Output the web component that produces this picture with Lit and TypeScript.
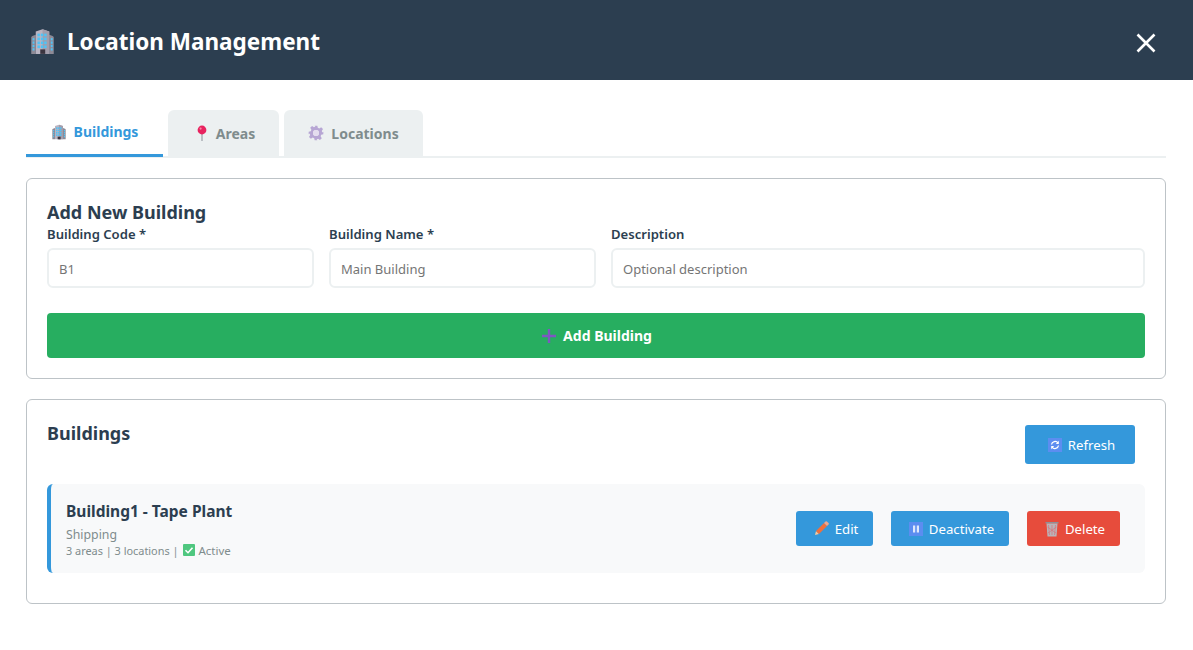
import { html, css, LitElement, svg } from 'lit';
import { customElement } from 'lit/decorators.js';

const building = (size: number) => html`
	<svg class="ico" width=${size} height=${size} viewBox="0 0 24 24">
		<path d="M3 7l3-1v17H2V8z" fill="#8d8a96" />
		<path d="M18 6l3 1 1 1v15h-4z" fill="#8d8a96" />
		<path d="M6 3l6-2 6 2v20H6z" fill="#b9b4c2" />
		<path d="M12 1l6 2v20h-6z" fill="#a39eac" />
		${[5, 8.5, 12, 15.5].map((y) => [7.5, 10.5, 13.5].map((x) => svg`<rect x=${x} y=${y} width="2.2" height="2.4" fill="#4fc3f7" />`))}
		${[9, 12, 15, 18].map((y) => svg`<rect x="3.2" y=${y} width="1.6" height="2" fill="#4fc3f7" /><rect x="19.4" y=${y} width="1.6" height="2" fill="#4fc3f7" />`)}
		<rect x="10" y="19" width="4.4" height="4" fill="#3b3540" />
	</svg>
`;

const pin = html`
	<svg class="ico" width="14" height="16" viewBox="0 0 14 16">
		<rect x="6.4" y="7" width="1.2" height="9" fill="#9aa0a6" />
		<circle cx="7" cy="5" r="4.4" fill="#e8235f" />
		<circle cx="5.6" cy="3.6" r="1.1" fill="#f78aa8" />
	</svg>
`;

const gear = html`
	<svg class="ico" width="16" height="16" viewBox="0 0 24 24">
		<path fill="#b7a6d4" fill-rule="evenodd" d="M10 1h4l.7 3.2 2.2.9 2.8-1.8 2.8 2.8-1.8 2.8.9 2.2L23 10v4l-3.2.7-.9 2.2 1.8 2.8-2.8 2.8-2.8-1.8-2.2.9L14 23h-4l-.7-3.2-2.2-.9-2.8 1.8-2.8-2.8 1.8-2.8-.9-2.2L1 14v-4l3.2-.7.9-2.2-1.8-2.8 2.8-2.8 2.8 1.8 2.2-.9zM12 7.5a4.5 4.5 0 1 0 0 9 4.5 4.5 0 0 0 0-9z" />
		<circle cx="12" cy="12" r="4.5" fill="#e4dcef" />
	</svg>
`;

const plus = html`
	<svg class="ico" width="14" height="14" viewBox="0 0 14 14">
		<path d="M5.8 0h2.4v5.8H14v2.4H8.2V14H5.8V8.2H0V5.8h5.8z" fill="#7e57c2" />
	</svg>
`;

const refresh = html`
	<svg class="ico" width="14" height="14" viewBox="0 0 14 14">
		<rect width="14" height="14" fill="#5c8df0" />
		<path d="M3.5 6.5A3.6 3.6 0 0 1 10 5M10.5 7.5A3.6 3.6 0 0 1 4 9" fill="none" stroke="#fff" stroke-width="1.3" />
		<path d="M10.8 2.8V6H7.8zM3.2 11.2V8h3z" fill="#fff" />
	</svg>
`;

const pencil = html`
	<svg class="ico" width="15" height="15" viewBox="0 0 15 15">
		<path d="M1 14l1-4 3 3z" fill="#f5c9a0" />
		<path d="M2 10l8-8 3 3-8 8z" fill="#f0703c" />
		<path d="M10 2l1.5-1.5a1 1 0 0 1 1.4 0l1.6 1.6a1 1 0 0 1 0 1.4L13 5z" fill="#f4a58a" />
	</svg>
`;

const pause = html`
	<svg class="ico" width="14" height="14" viewBox="0 0 14 14">
		<rect width="14" height="14" fill="#5c8df0" />
		<rect x="4" y="3.5" width="2.2" height="7" fill="#dfe8fb" />
		<rect x="7.8" y="3.5" width="2.2" height="7" fill="#dfe8fb" />
	</svg>
`;

const trash = html`
	<svg class="ico" width="14" height="16" viewBox="0 0 14 16">
		<path d="M0.5 1h13v1.5h-13z" fill="#8f8f96" />
		<path d="M1.5 2.5h11l-1 13h-9z" fill="#b9b4b8" />
		<path d="M3.5 4l1 10M7 4v10M10.5 4l-1 10M2.5 6l8.5 6M11.5 6L3 12" stroke="#d9737a" stroke-width="0.7" fill="none" />
	</svg>
`;

const check = html`
	<svg class="ico" width="12" height="12" viewBox="0 0 12 12">
		<rect width="12" height="12" rx="1" fill="#4fc77f" />
		<path d="M2.5 6.2l2.5 2.500 4.500-5" fill="none" stroke="#fff" stroke-width="1.6" />
	</svg>
`;

@customElement('app-root')
export class AppRoot extends LitElement {
	static styles = css`
		:host {
			display: block;
			font-family: 'Noto Sans', 'Open Sans', sans-serif;
			color: #2c3e50;
			background: #fff;
			min-height: 650px;
		}
		.ico {
			flex: none;
		}
		header {
			height: 80px;
			box-sizing: border-box;
			background: #2c3e50;
			color: #fff;
			display: flex;
			align-items: center;
			justify-content: space-between;
			padding: 3px 36px 0 29px;
		}
		h1 {
			margin: 0;
			display: flex;
			align-items: center;
			gap: 11px;
			font-size: 22.5px;
			font-weight: 700;
		}
		.close {
			width: 22px;
			height: 22px;
			display: block;
			margin-top: 2px;
		}
		main {
			padding: 30px 27px 0 26px;
		}
		.tabs {
			display: flex;
			gap: 5px;
			border-bottom: 2px solid #ecf0f1;
			margin-bottom: 20px;
		}
		.tab {
			height: 46px;
			box-sizing: border-box;
			display: flex;
			align-items: center;
			justify-content: center;
			gap: 7px;
			background: #ecf0f1;
			color: #7f8c8d;
			font-size: 14px;
			font-weight: 700;
			border-radius: 6px 6px 0 0;
		}
		.tab.active {
			background: #fff;
			color: #3498db;
			border-bottom: 3px solid #3498db;
			border-radius: 0;
			height: 47px;
			margin-bottom: -1px;
			padding-bottom: 1px;
			width: 137px;
		}
		.tab.areas {
			width: 111px;
			padding-left: 3px;
		}
		.tab.locations {
			width: 139px;
		}
		.card {
			border: 1px solid #bdc3c7;
			border-radius: 6px;
			padding: 20px;
			margin-bottom: 20px;
		}
		h2 {
			margin: 0;
			font-size: 18px;
			line-height: 26px;
			font-weight: 700;
		}
		.fields {
			display: grid;
			grid-template-columns: 1fr 1fr 2fr;
			gap: 15px;
			margin-bottom: 25px;
		}
		label {
			display: block;
			font-size: 13.1px;
			line-height: 18px;
			font-weight: 600;
			margin-bottom: 5px;
		}
		.input {
			height: 40px;
			box-sizing: border-box;
			border: 2px solid #ecf0f1;
			border-radius: 6px;
			padding: 1px 10px 0;
			display: flex;
			align-items: center;
			font-size: 13px;
			color: #757575;
		}
		.add {
			height: 45px;
			background: #27ae60;
			color: #fff;
			border-radius: 4px;
			display: flex;
			align-items: center;
			justify-content: center;
			gap: 7px;
			padding-left: 2px;
			font-size: 14px;
			font-weight: 700;
		}
		.list-head {
			display: flex;
			justify-content: space-between;
			align-items: flex-start;
			padding-right: 10px;
			margin-bottom: 20px;
		}
		.list-head .btn {
			height: 39px;
			margin-top: 5px;
			width: 110px;
			gap: 6px;
		}
		.row {
			height: 89px;
			box-sizing: border-box;
			background: #f8f9fa;
			border-left: 4px solid #3498db;
			border-radius: 6px;
			padding: 0 25px 0 15px;
			margin-bottom: 10px;
			display: flex;
			align-items: center;
			justify-content: space-between;
		}
		.name {
			font-size: 15.5px;
			font-weight: 700;
			line-height: 20px;
			padding-top: 1px;
			margin-bottom: 5px;
		}
		.sub {
			font-size: 12.3px;
			line-height: 17px;
			color: #7f8c8d;
		}
		.meta {
			font-size: 10.9px;
			line-height: 15px;
			color: #7f8c8d;
			display: flex;
			align-items: center;
			gap: 4px;
		}
		.meta .state {
			font-size: 11.5px;
		}
		.actions {
			display: flex;
			gap: 18px;
		}
		.btn {
			height: 35px;
			box-sizing: border-box;
			background: #3498db;
			color: #fff;
			border-radius: 3px;
			display: flex;
			align-items: center;
			justify-content: center;
			gap: 6px;
			padding-left: 3px;
			font-size: 13.2px;
		}
		.btn.edit {
			width: 77px;
		}
		.btn.deact {
			width: 118px;
		}
		.btn.del {
			width: 93px;
			background: #e74c3c;
		}
	`;

	render() {
		return html`
			<header>
				<h1>${building(27)}Location Management</h1>
				<svg class="close" viewBox="0 0 22 22">
					<path d="M2.5 2.5l17 17M19.5 2.5l-17 17" stroke="#fff" stroke-width="2.6" fill="none" />
				</svg>
			</header>
			<main>
				<div class="tabs">
					<div class="tab active">${building(16)}Buildings</div>
					<div class="tab areas">${pin}Areas</div>
					<div class="tab locations">${gear}Locations</div>
				</div>
				<section class="card">
					<h2>Add New Building</h2>
					<div class="fields">
						<div><label>Building Code *</label><div class="input">B1</div></div>
						<div><label>Building Name *</label><div class="input">Main Building</div></div>
						<div><label>Description</label><div class="input">Optional description</div></div>
					</div>
					<div class="add">${plus}Add Building</div>
				</section>
				<section class="card">
					<div class="list-head">
						<h2>Buildings</h2>
						<div class="btn">${refresh}Refresh</div>
					</div>
					<div class="row">
						<div>
							<div class="name">Building1 - Tape Plant</div>
							<div class="sub">Shipping</div>
							<div class="meta">3 areas | 3 locations | ${check} <span class="state">Active</span></div>
						</div>
						<div class="actions">
							<div class="btn edit">${pencil}Edit</div>
							<div class="btn deact">${pause}Deactivate</div>
							<div class="btn del">${trash}Delete</div>
						</div>
					</div>
				</section>
			</main>
		`;
	}
}
